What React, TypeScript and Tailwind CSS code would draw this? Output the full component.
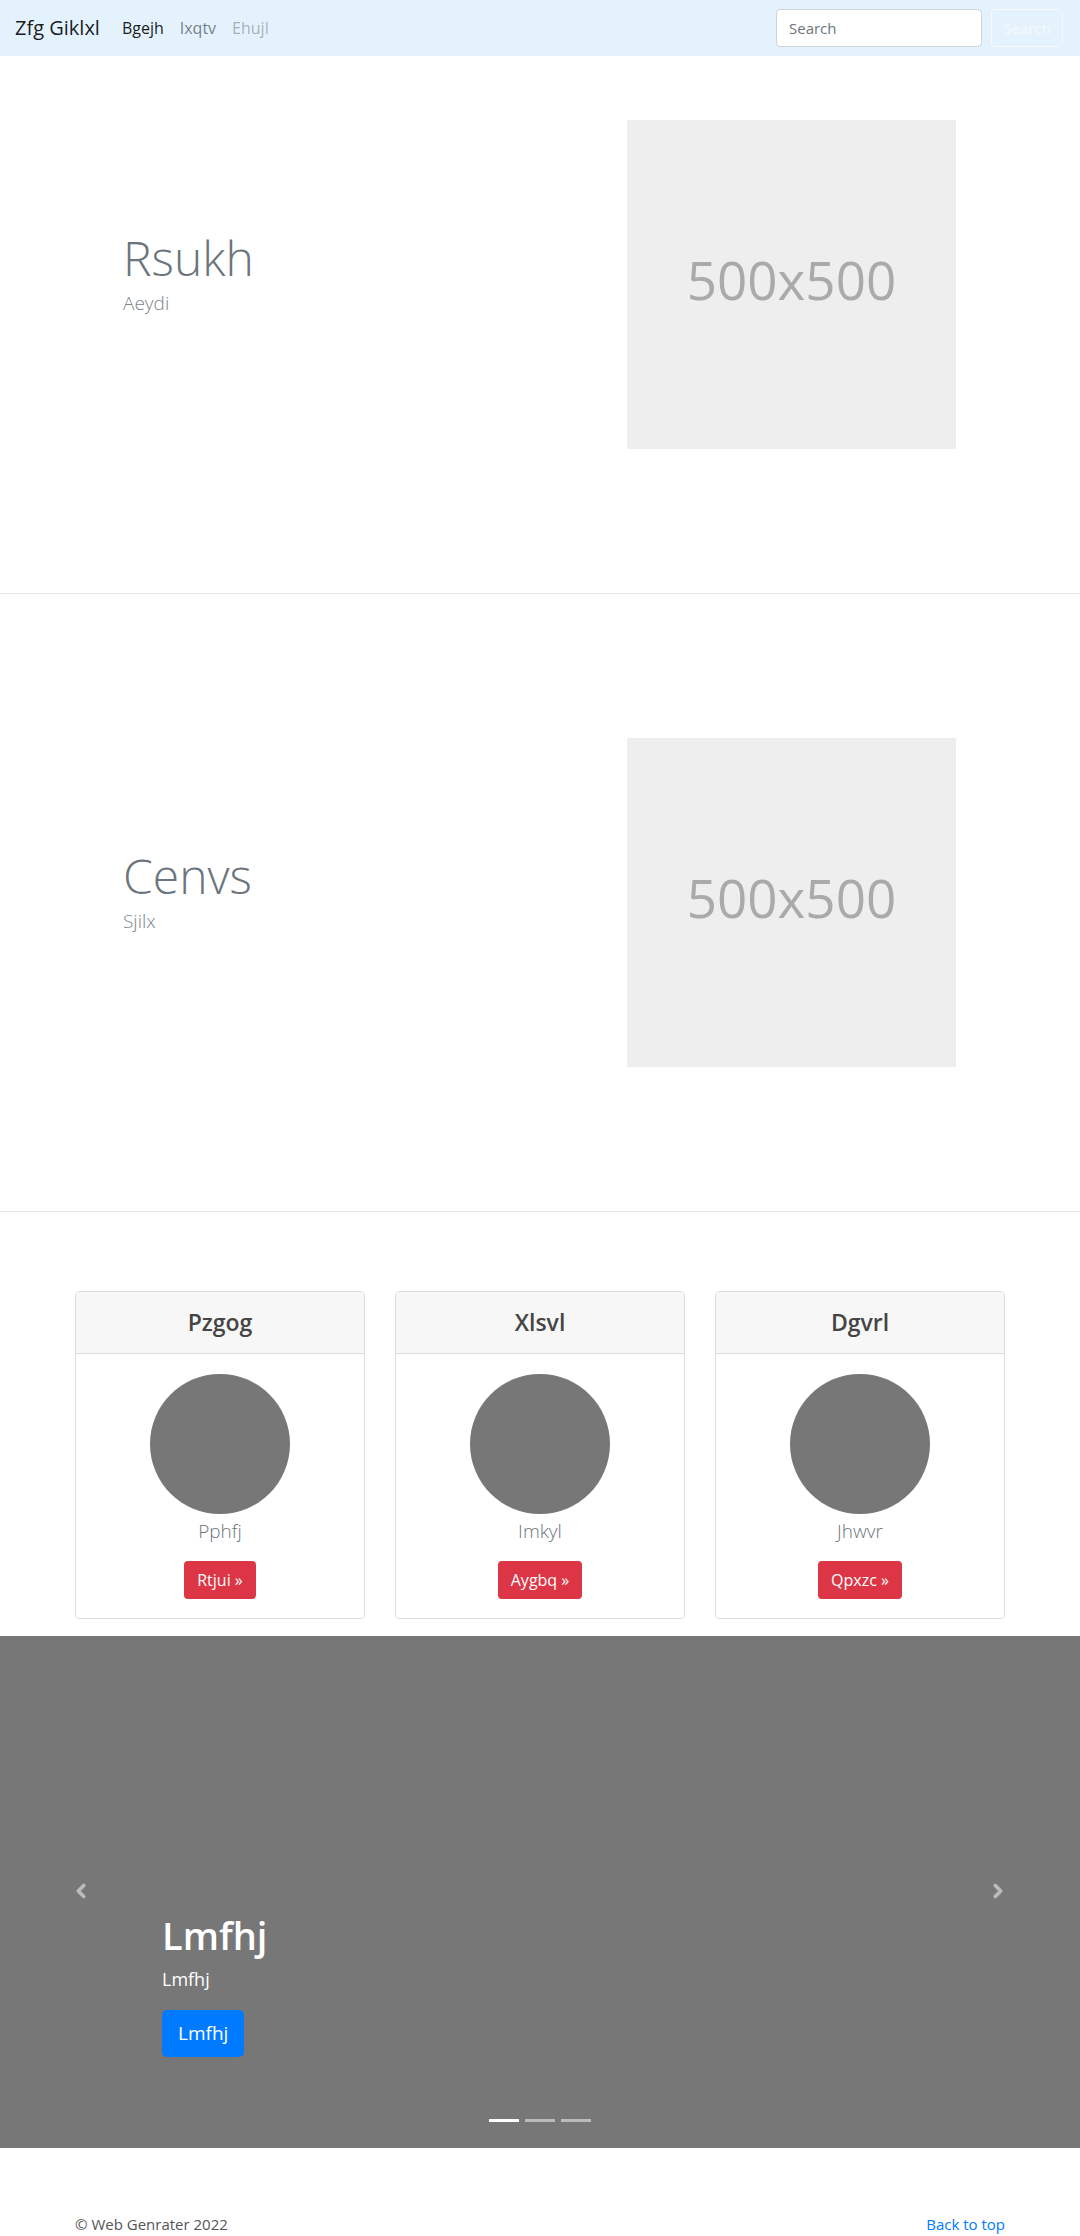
import { ChevronLeft, ChevronRight } from "lucide-react";

const plans = [
  { title: "Pzgog", text: "Pphfj", button: "Rtjui »" },
  { title: "Xlsvl", text: "Imkyl", button: "Aygbq »" },
  { title: "Dgvrl", text: "Jhwvr", button: "Qpxzc »" },
];

function Placeholder() {
  return (
    <div className="w-[329px] h-[329px] bg-[#eeeeee] flex items-center justify-center shrink-0 pb-[10px]">
      <span className="text-[53px] text-[#aaaaaa] leading-none">500x500</span>
    </div>
  );
}

function Feature({ title, lead, top }: { title: string; lead: string; top: string }) {
  return (
    <section className={`border-b border-[#e5e5e5] ${top} pb-[144px]`}>
      <div className="flex items-center pl-[123px] pr-[124px]">
        <div className="flex-1 pb-[22px]">
          <h1 className="text-[48px] font-light text-[#6c757d] leading-[1.2]">{title}</h1>
          <p className="mt-[2px] text-[19px] font-light text-[#7d848a] leading-[1.5]">{lead}</p>
        </div>
        <Placeholder />
      </div>
    </section>
  );
}

export default function App() {
  return (
    <div className="w-[1080px] bg-white font-['Open_Sans','Noto_Sans',sans-serif] text-[#212529]">
      <nav className="h-[56px] bg-[#e3f2fd] flex items-center pl-[15px] pr-[17px]">
        <span className="text-[20px] text-black/90 mr-[14px]">Zfg Giklxl</span>
        <div className="flex text-[16px]">
          <span className="px-2 text-black/90">Bgejh</span>
          <span className="px-2 text-black/50">Ixqtv</span>
          <span className="px-2 text-black/30">Ehujl</span>
        </div>
        <div className="ml-auto flex items-center gap-[9px]">
          <div className="w-[206px] h-[38px] bg-white border border-[#ced4da] rounded-[4px] px-[12px] flex items-center text-[15px] text-[#6c757d]">
            Search
          </div>
          <div className="w-[72px] h-[38px] border border-[#f8f9fa] rounded-[4px] flex items-center justify-center text-[15px] text-[#f8f9fa]">
            Search
          </div>
        </div>
      </nav>

      <Feature title="Rsukh" lead="Aeydi" top="pt-[64px]" />
      <Feature title="Cenvs" lead="Sjilx" top="pt-[144px]" />

      <section className="pt-[79px] pb-[17px] px-[75px]">
        <div className="grid grid-cols-3 gap-[30px]">
          {plans.map((p) => (
            <div key={p.title} className="border border-[#dddddd] rounded-[4px] flex flex-col">
              <div className="h-[62px] bg-[#f7f7f7] border-b border-[#dddddd] flex items-center justify-center">
                <h4 className="text-[23px] font-semibold text-[#454545]">{p.title}</h4>
              </div>
              <div className="flex flex-col items-center pt-[20px] pb-[19px]">
                <div className="w-[140px] h-[140px] rounded-full bg-[#777777]" />
                <p className="mt-[3px] text-[19px] font-light text-[#6c757d] leading-[1.5]">{p.text}</p>
                <div className="mt-[15px] h-[38px] px-[13px] rounded-[4px] bg-[#dc3545] text-white text-[16px] flex items-center">
                  {p.button}
                </div>
              </div>
            </div>
          ))}
        </div>
      </section>

      <section className="relative h-[512px] bg-[#777777]">
        <ChevronLeft className="absolute left-[70px] top-[244px] w-[22px] h-[22px] text-white/50" strokeWidth={4} />
        <ChevronRight className="absolute right-[71px] top-[244px] w-[22px] h-[22px] text-white/50" strokeWidth={4} />
        <div className="absolute left-[162px] top-[277px] text-white">
          <h1 className="text-[38px] font-semibold leading-[1.2]">Lmfhj</h1>
          <p className="mt-[8px] text-[18px] leading-[1.5]">Lmfhj</p>
          <div className="mt-[17px] inline-flex h-[47px] px-[16px] items-center rounded-[5px] bg-[#007bff] text-[19px]">
            Lmfhj
          </div>
        </div>
        <div className="absolute bottom-[26px] left-0 right-0 flex justify-center gap-[6px]">
          <span className="w-[30px] h-[3px] bg-white" />
          <span className="w-[30px] h-[3px] bg-white/50" />
          <span className="w-[30px] h-[3px] bg-white/50" />
        </div>
      </section>

      <footer className="h-[88px] pt-[64px] px-[75px] flex justify-between text-[15px] leading-[24px]">
        <span className="text-[#555555]">© Web Genrater 2022</span>
        <span className="text-[#007bff]">Back to top</span>
      </footer>
    </div>
  );
}
